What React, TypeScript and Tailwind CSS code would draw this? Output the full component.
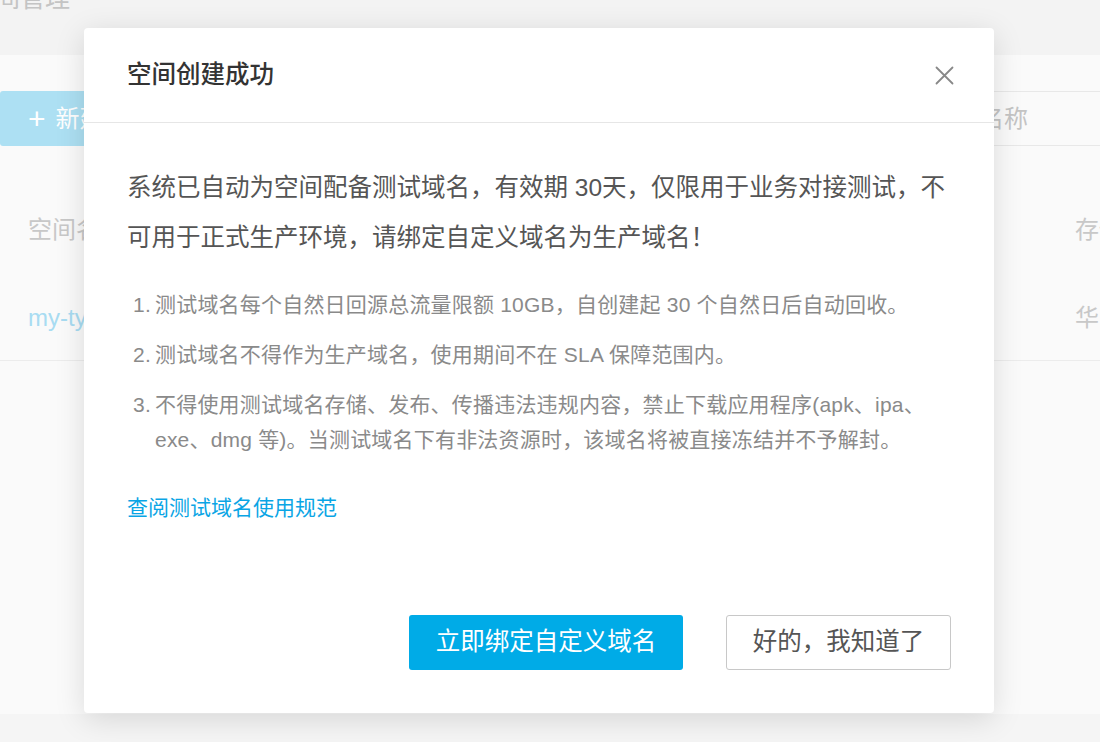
import React from 'react';

const font = { fontFamily: '"Liberation Sans", "Noto Sans CJK SC", sans-serif' };

const notes = [
  '测试域名每个自然日回源总流量限额 10GB，自创建起 30 个自然日后自动回收。',
  '测试域名不得作为生产域名，使用期间不在 SLA 保障范围内。',
  '不得使用测试域名存储、发布、传播违法违规内容，禁止下载应用程序(apk、ipa、exe、dmg 等)。当测试域名下有非法资源时，该域名将被直接冻结并不予解封。',
];

const SpaceListBackground: React.FC = () => (
  <div className="flex flex-col h-full">
    {/* Page title, scrolled mostly out of view */}
    <div className="h-[55px] bg-[#f3f3f3] overflow-hidden">
      <div className="-mt-[20px] -ml-[30px] text-[25px] leading-[36px] text-[#c4c4c4] whitespace-nowrap">空间管理</div>
    </div>

    <div className="h-[659px] bg-[#fafafa]">
      {/* Toolbar */}
      <div className="pt-[36px] flex items-start justify-between">
        <button className="w-[170px] h-[55px] rounded-[3px] bg-[#ade0f3] text-white text-[24px] flex items-center pl-[28px] gap-[10px]">
          <span className="text-[30px] font-light leading-none">+</span>
          <span>新建空间</span>
        </button>
        <div className="w-[254px] h-[55px] border border-[#e8e8e8] border-r-0 pl-[13px] flex items-center text-[24px] text-[#c4c4c4] whitespace-nowrap">
          请输入空间名称
        </div>
      </div>

      {/* Table */}
      <div className="mt-[39px]">
        <div className="h-[90px] flex items-center justify-between pl-[28px] text-[24px] text-[#c8c8c8]">
          <span>空间名称</span>
          <span className="w-[25px] overflow-hidden whitespace-nowrap">存储区域</span>
        </div>
        <div className="h-[86px] flex items-center justify-between pl-[28px] text-[24px] border-b border-[#ececec]">
          <span className="text-[#a8dcf2]">my-type-space</span>
          <span className="w-[25px] overflow-hidden whitespace-nowrap text-[#c8c8c8]">华东</span>
        </div>
      </div>
    </div>

    <div className="flex-1 bg-[#f5f5f5]" />
  </div>
);

const SuccessDialog: React.FC = () => (
  <div className="absolute left-[84px] top-[28px] w-[910px] h-[685px] bg-white rounded-[4px] shadow-[0_6px_30px_rgba(0,0,0,0.13)] flex flex-col">
    {/* Header */}
    <div className="h-[95px] shrink-0 border-b border-[#e6e6e6] pl-[43px] pr-[40px] flex items-center justify-between">
      <h3 className="text-[24.5px] font-medium text-[#333]">空间创建成功</h3>
      <button className="w-[20px] h-[20px] flex items-center justify-center">
        <svg width="19" height="19" viewBox="0 0 19 19" fill="none" stroke="#888" strokeWidth={1.8} strokeLinecap="round">
          <path d="M1.5 1.5l16 16M17.5 1.5l-16 16" />
        </svg>
      </button>
    </div>

    {/* Body */}
    <div className="flex-1 flex flex-col px-[43px] pt-[40px] pb-[43px]">
      <p className="text-[24.5px] leading-[50px] text-[#555]">
        系统已自动为空间配备测试域名，有效期 30天，仅限用于业务对接测试，不可用于正式生产环境，请绑定自定义域名为生产域名！
      </p>

      <ol className="mt-[24px] space-y-[15px] text-[21px] leading-[35px] text-[#8a8a8a] tracking-[0.2px]">
        {notes.map((note, i) => (
          <li key={i} className="flex">
            <span className="w-[28px] shrink-0 pl-[6px] whitespace-nowrap">{i + 1}.</span>
            <span>{note}</span>
          </li>
        ))}
      </ol>

      <a className="mt-[33px] text-[21px] leading-[35px] text-[#0aa5e5] self-start cursor-pointer">查阅测试域名使用规范</a>

      {/* Footer */}
      <div className="mt-auto flex justify-end gap-[43px]">
        <button className="w-[274px] h-[55px] rounded-[3px] bg-[#00abe7] text-white text-[24.5px]">
          立即绑定自定义域名
        </button>
        <button className="w-[225px] h-[55px] rounded-[3px] border border-[#c8c8c8] bg-white text-[#555] text-[24.5px]">
          好的，我知道了
        </button>
      </div>
    </div>
  </div>
);

export default function App() {
  return (
    <div className="relative w-full h-[742px] overflow-hidden bg-[#f5f5f5]" style={font}>
      <SpaceListBackground />
      <SuccessDialog />
    </div>
  );
}
